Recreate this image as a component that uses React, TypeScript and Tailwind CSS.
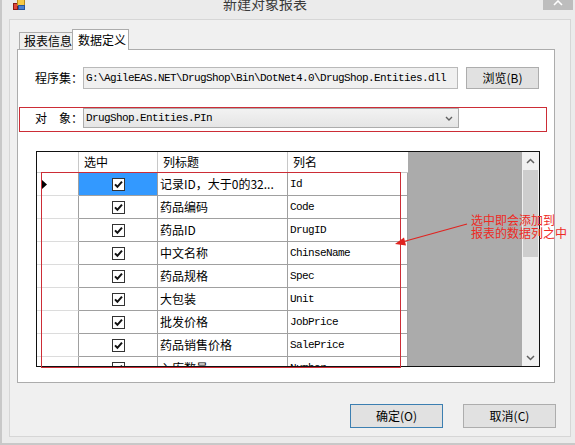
import React from "react";

const cjk = "font-['Noto_Sans_CJK_SC',sans-serif]";
const mono = "font-['Liberation_Mono',monospace] text-[11px] tracking-[-0.6px] text-black";

const rows: [string, string][] = [
  ["记录ID，大于0的32...", "Id"],
  ["药品编码", "Code"],
  ["药品ID", "DrugID"],
  ["中文名称", "ChinseName"],
  ["药品规格", "Spec"],
  ["大包装", "Unit"],
  ["批发价格", "JobPrice"],
  ["药品销售价格", "SalePrice"],
  ["入库数量", "Number"],
];

function Check() {
  return (
    <div className="w-[13px] h-[13px] border border-[#333333] bg-white flex items-center justify-center">
      <svg width="9" height="9" viewBox="0 0 9 9">
        <path d="M1 4.4 L3.4 6.8 L8 1.6" fill="none" stroke="#111" strokeWidth="2" />
      </svg>
    </div>
  );
}

export default function App() {
  return (
    <div className="w-[575px] h-[445px] overflow-hidden relative bg-[#ebebeb] border-l-2 border-b-2 border-[#c8c8c8] flex flex-col">
      {/* title bar */}
      <div className="h-[19px] shrink-0 flex items-start overflow-hidden">
        <svg className="ml-[11px] shrink-0" width="12" height="10" viewBox="0 0 12 10">
          <rect x="0.5" y="3.5" width="4" height="6" fill="#e0463a" stroke="#8a1b14" />
          <rect x="4.5" y="-0.5" width="7" height="6" fill="#f6c945" stroke="#b98a1a" />
          <rect x="5.5" y="5.5" width="6" height="4" fill="#4a7fd0" stroke="#25549c" />
        </svg>
        <div className={`${cjk} ml-[198px] -mt-[4px] text-[14px] leading-[14px] text-[#3a3a3a]`}>新建对象报表</div>
        <div className="ml-auto mr-[2px] w-[30px] h-[10px] bg-[#bdbdbd]">
          <svg width="30" height="10" viewBox="0 0 30 10">
            <path d="M11 5 L15 1 L19 5" fill="none" stroke="#ffffff" strokeWidth="1.6" />
          </svg>
        </div>
      </div>

      <div className="flex flex-1">
        <div className="w-[7px] shrink-0" />
        <div className="w-[562px] h-[418px] border border-[#d6d6d6] bg-[#f0f0f0] flex flex-col">
          <div className="pt-[9px] pl-[7px]">
            {/* tabs */}
            <div className="flex items-end h-[20px] pl-[2px]">
              <div className={`${cjk} w-[53px] h-[17px] border-l border-t border-[#acacac] bg-[#f0f0f0] flex items-center pl-[4px] text-[12px] leading-none text-black`}>
                报表信息
              </div>
              <div className={`${cjk} w-[57px] h-[21px] -mb-px relative z-10 border-l border-t border-r border-[#acacac] bg-white flex items-center pl-[5px] text-[12px] leading-none text-black`}>
                数据定义
              </div>
            </div>
            {/* panel */}
            <div className="w-[538px] h-[334px] border border-[#acacac] bg-white flex flex-col">
              <div className="flex items-center mt-[17px] pl-[17px] h-[22px]">
                <div className={`${cjk} w-[48px] text-[12px] leading-none text-black`}>程序集：</div>
                <div className="w-[375px] h-[22px] border border-[#b9b9b9] bg-[#f0f0f0] flex items-center pl-[2px]">
                  <span className={mono}>{"G:\\AgileEAS.NET\\DrugShop\\Bin\\DotNet4.0\\DrugShop.Entities.dll"}</span>
                </div>
                <div className={`${cjk} ml-[8px] w-[73px] h-[22px] border border-[#adadad] bg-[#e1e1e1] flex items-center justify-center text-[12px] leading-none text-black`}>
                  浏览(B)
                </div>
              </div>

              <div className="ml-[1px] mt-[18px] w-[528px] h-[25px] border border-[#cc2d36] flex items-start">
                <div className={`${cjk} pl-[15px] w-[63px] h-[19px] flex items-center text-[12px] leading-none text-black`}>对　象：</div>
                <div className="w-[376px] h-[20px] border border-[#acacac] bg-gradient-to-b from-[#f2f2f2] to-[#e5e5e5] flex items-center pl-[2px] pr-[5px]">
                  <span className={`${mono} flex-1`}>DrugShop.Entities.PIn</span>
                  <svg width="8" height="5" viewBox="0 0 8 5">
                    <path d="M1 1 L4 4 L7 1" fill="none" stroke="#606060" strokeWidth="1.4" />
                  </svg>
                </div>
              </div>

              {/* grid */}
              <div className="ml-[18px] mt-[19px] w-[504px] h-[216px] border border-[#111111] flex relative">
                <div className="w-[371px] flex flex-col overflow-hidden bg-white">
                  <div className={`${cjk} flex h-[21px] shrink-0 text-[12px] leading-none text-black`}>
                    <div className="w-[42px] border-r border-b border-[#c8c8c8]" />
                    <div className="w-[79px] border-r border-b border-[#c8c8c8] flex items-center pl-[5px]">选中</div>
                    <div className="w-[130px] border-r border-b border-[#c8c8c8] flex items-center pl-[5px]">列标题</div>
                    <div className="w-[120px] border-b border-[#c8c8c8] flex items-center pl-[5px]">列名</div>
                  </div>
                  {rows.map((r, i) => (
                    <div key={i} className="flex h-[23px] shrink-0">
                      <div className="w-[42px] border-r border-b border-r-[#a0a0a0] border-b-[#dcdcdc] flex items-center pl-[5px]">
                        {i === 0 && (
                          <svg width="5" height="9" viewBox="0 0 5 9">
                            <path d="M0 0 L5 4.5 L0 9 Z" fill="#000" />
                          </svg>
                        )}
                      </div>
                      <div className={`w-[79px] border-r border-b border-[#a0a0a0] flex items-center justify-center ${i === 0 ? "bg-[#3399ff]" : "bg-white"}`}>
                        <Check />
                      </div>
                      <div className={`${cjk} w-[130px] border-r border-b border-[#a0a0a0] flex items-center pl-[2px] text-[12px] leading-none text-black whitespace-nowrap overflow-hidden`}>
                        {r[0]}
                      </div>
                      <div className="w-[120px] border-r border-b border-[#a0a0a0] flex items-center pl-[2px]">
                        <span className={mono}>{r[1]}</span>
                      </div>
                    </div>
                  ))}
                </div>
                <div className="flex-1 bg-[#ababab]" />
                <div className="w-[17px] bg-[#f0f0f0] flex flex-col items-center">
                  <div className="h-[17px] w-full flex items-center justify-center">
                    <svg width="9" height="6" viewBox="0 0 9 6">
                      <path d="M1 5 L4.5 1.5 L8 5" fill="none" stroke="#606060" strokeWidth="1.5" />
                    </svg>
                  </div>
                  <div className="mt-[1px] w-[15px] h-[87px] bg-[#cdcdcd]" />
                  <div className="flex-1" />
                  <div className="h-[17px] w-full flex items-center justify-center">
                    <svg width="9" height="6" viewBox="0 0 9 6">
                      <path d="M1 1 L4.5 4.5 L8 1" fill="none" stroke="#606060" strokeWidth="1.5" />
                    </svg>
                  </div>
                </div>
                {/* red annotation box over rows */}
                <div className="absolute left-[4px] top-[20px] w-[360px] h-[196px] border border-[#cc2d36] pointer-events-none" />
              </div>
            </div>
          </div>

          {/* bottom buttons */}
          <div className="flex justify-end gap-[20px] pr-[14px] mt-[21px]">
            <div className={`${cjk} w-[93px] h-[24px] border border-[#3c7fb1] bg-[#e1e1e1] flex items-center justify-center text-[12px] leading-none text-black`}>
              确定(O)
            </div>
            <div className={`${cjk} w-[93px] h-[24px] border border-[#adadad] bg-[#e1e1e1] flex items-center justify-center text-[12px] leading-none text-black`}>
              取消(C)
            </div>
          </div>
        </div>
      </div>

      {/* annotation arrow and text */}
      <svg className="absolute left-[388px] top-[218px]" width="82" height="32" viewBox="0 0 82 32">
        <path d="M77 6 L12 24" stroke="#e0231f" strokeWidth="1.2" />
        <path d="M5 26 L16 27.5 L14 19.5 Z" fill="#e0231f" />
      </svg>
      <div className={`${cjk} absolute left-[469px] top-[213px] text-[12px] leading-[13px] text-[#ee2a24]`}>
        <div>选中即会添加到</div>
        <div>报表的数据列之中</div>
      </div>
    </div>
  );
}
